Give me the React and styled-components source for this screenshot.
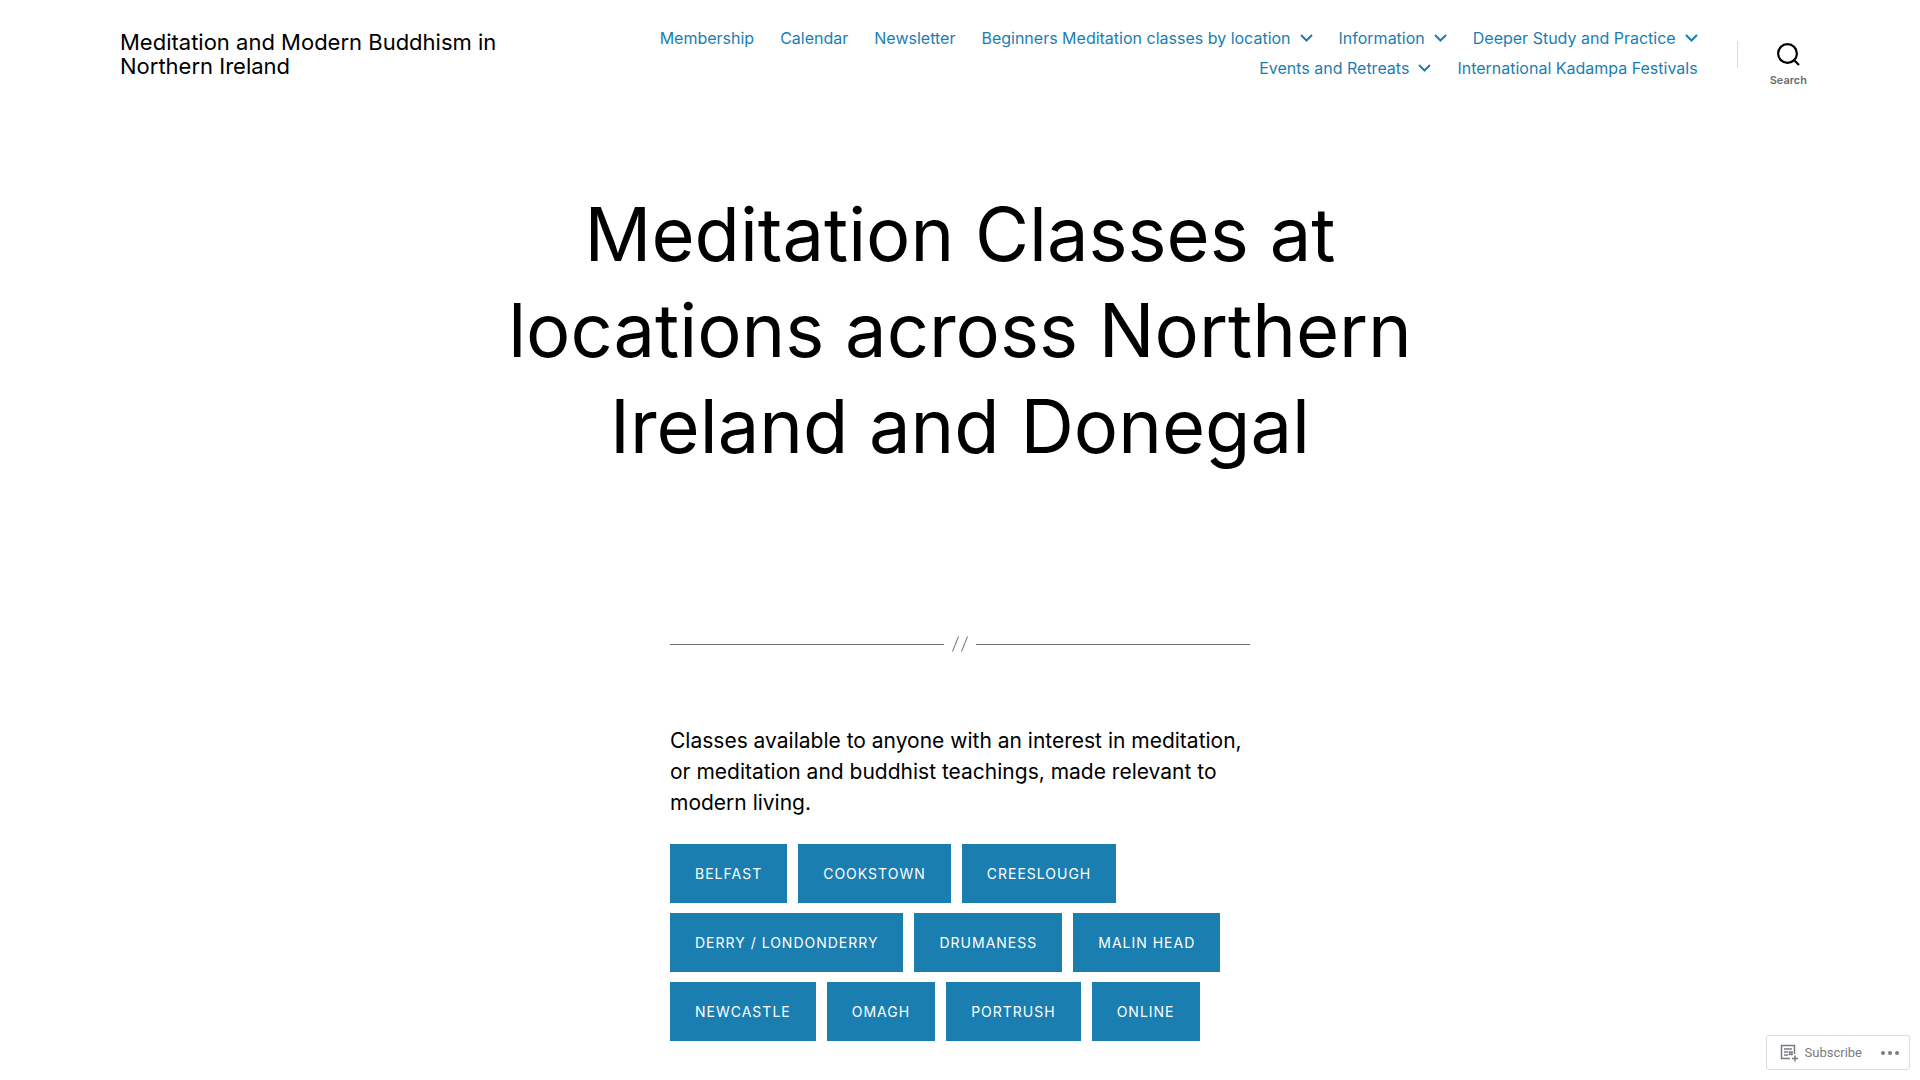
import React from 'react';
import styled, { createGlobalStyle } from 'styled-components';

const accent = '#1a7eb1';

const GlobalStyle = createGlobalStyle`
  *, *:before, *:after { box-sizing: border-box; }
  body {
    margin: 0;
    background: #fff;
    color: #000;
    font-family: Inter, "Liberation Sans", sans-serif;
  }
  a { text-decoration: none; }
`;

const Header = styled.header`
  display: flex;
  align-items: center;
  min-height: 108px;
  padding: 20px 113px 20px 120px;
`;
const SiteTitle = styled.a`
  flex: 0 0 400px;
  color: #000;
  font-size: 22px;
  line-height: 24px;
`;
const Nav = styled.nav`
  flex: 1;
  padding: 0 39px 2px 0;
`;
const Menu = styled.ul`
  display: flex;
  flex-wrap: wrap;
  justify-content: flex-end;
  column-gap: 26px;
  margin: 0;
  padding: 0;
  list-style: none;
`;
const MenuLink = styled.a`
  display: flex;
  align-items: center;
  gap: 9px;
  color: ${accent};
  font-size: 16px;
  line-height: 30px;
  white-space: nowrap;
`;
const SearchWrap = styled.div`
  display: flex;
  align-items: center;
  gap: 32px;
  &:before {
    content: "";
    width: 1px;
    height: 27px;
    background: #dcdcdc;
  }
`;
const SearchButton = styled.button`
  display: flex;
  flex-direction: column;
  align-items: center;
  gap: 7px;
  padding: 22px 0 0;
  border: 0;
  background: none;
  color: #6d6d6d;
  font: 600 11px/14px Inter, sans-serif;
  cursor: pointer;
`;

const EntryTitle = styled.h1`
  max-width: 1000px;
  margin: 78px auto 0;
  font-size: 74px;
  font-weight: 400;
  line-height: 96px;
  text-align: center;
`;
const Entry = styled.div`
  max-width: 580px;
  margin: 162px auto 0;
`;
const Separator = styled.div`
  display: flex;
  align-items: center;
  gap: 8px;
  color: #6d6d6d;
  &:before, &:after {
    content: "";
    flex: 1;
    height: 1px;
    background: #6d6d6d;
  }
`;
const Text = styled.p`
  margin: 73px 0 26px;
  font-size: 21px;
  line-height: 31px;
`;
const Buttons = styled.div`
  display: flex;
  flex-wrap: wrap;
  gap: 10px 11px;
  padding-bottom: 38px;
`;
const ClassLink = styled.a`
  padding: 0 25px;
  background: ${accent};
  color: #fff;
  font-size: 14px;
  letter-spacing: 1px;
  line-height: 59px;
  text-transform: uppercase;
`;

const ActionBar = styled.div`
  position: fixed;
  right: 10px;
  bottom: 10px;
  display: flex;
  align-items: center;
  gap: 19px;
  height: 35px;
  padding: 0 10px 0 13px;
  border: 1px solid #dcdcde;
  border-radius: 3px;
  background: #fff;
`;
const ActionButton = styled.button`
  display: flex;
  align-items: center;
  gap: 7px;
  padding: 0;
  border: 0;
  background: none;
  color: #787c82;
  font: 13px/20px Roboto, sans-serif;
  cursor: pointer;
`;

const menu = [
  { label: 'Membership' },
  { label: 'Calendar' },
  { label: 'Newsletter' },
  { label: 'Beginners Meditation classes by location', sub: true },
  { label: 'Information', sub: true },
  { label: 'Deeper Study and Practice', sub: true },
  { label: 'Events and Retreats', sub: true },
  { label: 'International Kadampa Festivals' },
];

const places = [
  'Belfast', 'Cookstown', 'Creeslough', 'Derry / Londonderry', 'Drumaness',
  'Malin Head', 'Newcastle', 'Omagh', 'Portrush', 'Online',
];

const Chevron = () => (
  <svg width="13" height="8" viewBox="0 0 13 8" fill="none" stroke="currentColor" strokeWidth="2" aria-hidden="true">
    <path d="M1 1l5.500 5.500L12 1" />
  </svg>
);

const SearchIcon = () => (
  <svg width="23" height="23" viewBox="0 0 23 23" fill="none" stroke="#000" strokeWidth="2.200" aria-hidden="true">
    <circle cx="10.500" cy="10.500" r="9.400" />
    <path d="M17 17l5 5" />
  </svg>
);

const Slashes = () => (
  <svg width="16" height="16" viewBox="0 0 16 16" fill="none" stroke="currentColor" aria-hidden="true">
    <path d="M.5 15.500L6.500 .5M9.500 15.500L15.500 .5" />
  </svg>
);

const SubscribeIcon = () => (
  <svg width="18" height="18" viewBox="0 0 18 18" fill="none" stroke="currentColor" strokeWidth="1.500" aria-hidden="true">
    <path d="M10 14.500H1.500V1.500h13V10M4 5h8M4 8h4M4 11h4M15 11.500v6M12 14.500h6" />
    <path d="M9.500 8h2.500v2.500H9.500z" />
  </svg>
);

const Dots = () => (
  <svg width="18" height="4" viewBox="0 0 18 4" fill="currentColor" aria-hidden="true">
    <circle cx="2" cy="2" r="2" />
    <circle cx="9" cy="2" r="2" />
    <circle cx="16" cy="2" r="2" />
  </svg>
);

const App = () => (
  <>
    <GlobalStyle />
    <Header>
      <SiteTitle href="#">Meditation and Modern Buddhism in Northern Ireland</SiteTitle>
      <Nav>
        <Menu>
          {menu.map(({ label, sub }) => (
            <li key={label}>
              <MenuLink href="#">{label}{sub && <Chevron />}</MenuLink>
            </li>
          ))}
        </Menu>
      </Nav>
      <SearchWrap>
        <SearchButton type="button">
          <SearchIcon />
          Search
        </SearchButton>
      </SearchWrap>
    </Header>
    <main>
      <EntryTitle>Meditation Classes at locations across Northern Ireland and Donegal</EntryTitle>
      <Entry>
        <Separator role="separator"><Slashes /></Separator>
        <Text>
          Classes available to anyone with an interest in meditation, or meditation and
          buddhist teachings, made relevant to modern living.
        </Text>
        <Buttons>
          {places.map((place) => <ClassLink href="#" key={place}>{place}</ClassLink>)}
        </Buttons>
      </Entry>
    </main>
    <ActionBar>
      <ActionButton type="button"><SubscribeIcon />Subscribe</ActionButton>
      <ActionButton type="button" aria-label="More"><Dots /></ActionButton>
    </ActionBar>
  </>
);

export default App;
